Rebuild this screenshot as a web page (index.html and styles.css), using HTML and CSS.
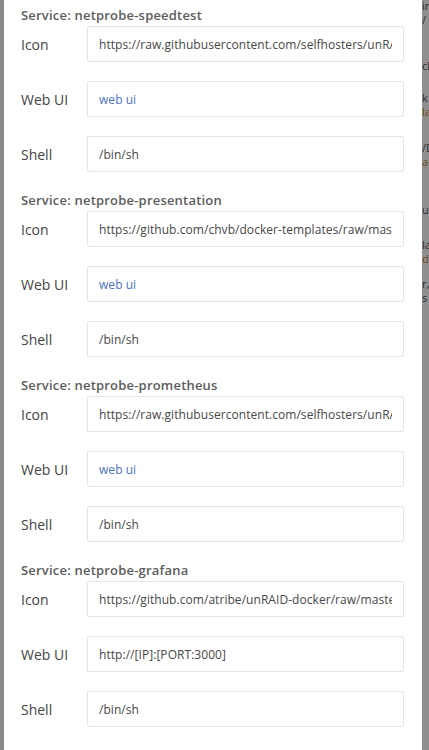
FILE: index.html
```html
<!DOCTYPE html>
<html>
<head>
<meta charset="utf-8">
<link rel="stylesheet" href="styles.css">
</head>
<body>
<div class="page">
  <div class="edge-left"></div>
  <div class="modal">
    <section class="service">
      <h3 class="service-title">Service: netprobe-speedtest</h3>
      <div class="row"><div class="label">Icon</div><div class="field"><span class="val">https://raw.githubusercontent.com/selfhosters/unRAID-CA-templates/master/templates/img/speedtest.png</span></div></div>
      <div class="row"><div class="label">Web UI</div><div class="field"><span class="val link">web ui</span></div></div>
      <div class="row"><div class="label">Shell</div><div class="field"><span class="val">/bin/sh</span></div></div>
    </section>
    <section class="service">
      <h3 class="service-title">Service: netprobe-presentation</h3>
      <div class="row"><div class="label">Icon</div><div class="field"><span class="val">https://github.com/chvb/docker-templates/raw/master/chvb/images/netprobe.png</span></div></div>
      <div class="row"><div class="label">Web UI</div><div class="field"><span class="val link">web ui</span></div></div>
      <div class="row"><div class="label">Shell</div><div class="field"><span class="val">/bin/sh</span></div></div>
    </section>
    <section class="service">
      <h3 class="service-title">Service: netprobe-prometheus</h3>
      <div class="row"><div class="label">Icon</div><div class="field"><span class="val">https://raw.githubusercontent.com/selfhosters/unRAID-CA-templates/master/templates/img/prometheus.png</span></div></div>
      <div class="row"><div class="label">Web UI</div><div class="field"><span class="val link">web ui</span></div></div>
      <div class="row"><div class="label">Shell</div><div class="field"><span class="val">/bin/sh</span></div></div>
    </section>
    <section class="service">
      <h3 class="service-title">Service: netprobe-grafana</h3>
      <div class="row"><div class="label">Icon</div><div class="field"><span class="val">https://github.com/atribe/unRAID-docker/raw/master/icons/grafana.png</span></div></div>
      <div class="row"><div class="label">Web UI</div><div class="field"><span class="val">http://[IP]:[PORT:3000]</span></div></div>
      <div class="row"><div class="label">Shell</div><div class="field"><span class="val">/bin/sh</span></div></div>
    </section>
  </div>
  <div class="edge-right">
    <div class="bg-line t1">ir</div>
    <div class="bg-line t2">/</div>
    <div class="bg-line t3">cl</div>
    <div class="bg-line t4">k</div>
    <div class="bg-line t5 warm">la</div>
    <div class="bg-line t6">/D</div>
    <div class="bg-line t7 warm">a</div>
    <div class="bg-line t8">u</div>
    <div class="bg-line t9">la</div>
    <div class="bg-line t10 warm">d</div>
    <div class="bg-line t11">r,</div>
    <div class="bg-line t12">s</div>
  </div>
</div>
</body>
</html>
```

FILE: styles.css
```css
html, body {
  margin: 0;
  padding: 0;
  width: 429px;
  height: 750px;
  overflow: hidden;
  background: #8d8d8d;
  font-family: "Open Sans", "Noto Sans", sans-serif;
}

.page {
  display: flex;
  height: 750px;
}

.edge-left {
  width: 4px;
  flex: none;
  background: #8a8a8a;
}

.modal {
  width: 418px;
  flex: none;
  height: 750px;
  overflow: hidden;
  background: #ffffff;
  box-sizing: border-box;
  padding: 7px 18px 0 17px;
}

.service {
  margin-bottom: 20px;
}

.service-title {
  margin: 0 0 3px;
  font-size: 13px;
  line-height: 16px;
  font-weight: 600;
  letter-spacing: 0.2px;
  color: #5c5c5c;
}

.row {
  display: flex;
  align-items: center;
  height: 36px;
  margin-bottom: 19px;
}

.row:last-child {
  margin-bottom: 0;
}

.label {
  width: 66px;
  flex: none;
  font-size: 14px;
  color: #444444;
}

.field {
  width: 317px;
  height: 36px;
  flex: none;
  box-sizing: border-box;
  border: 1px solid #e4e4e4;
  border-radius: 2px;
  padding: 0 11px;
  display: flex;
  align-items: center;
  background: #ffffff;
}

.val {
  display: block;
  width: 100%;
  overflow: hidden;
  white-space: nowrap;
  font-size: 12px;
  letter-spacing: 0.05px;
  color: #474747;
}

.val.link {
  color: #4a72c4;
}

.edge-right {
  flex: 1;
  overflow: hidden;
  background: #8f8f8f;
  font-size: 11px;
  line-height: 14px;
  color: #2b2b2b;
  white-space: nowrap;
}

.bg-line {
  height: 14px;
}

.warm { color: #6a4a22; }

.t1 { margin-top: -1px; }
.t2 { margin-top: 0; }
.t3 { margin-top: 32px; }
.t4 { margin-top: 18px; }
.t5 { margin-top: 0; }
.t6 { margin-top: 22px; }
.t7 { margin-top: 0; }
.t8 { margin-top: 34px; }
.t9 { margin-top: 21px; }
.t10 { margin-top: 0; }
.t11 { margin-top: 11px; }
.t12 { margin-top: 0; }
```
